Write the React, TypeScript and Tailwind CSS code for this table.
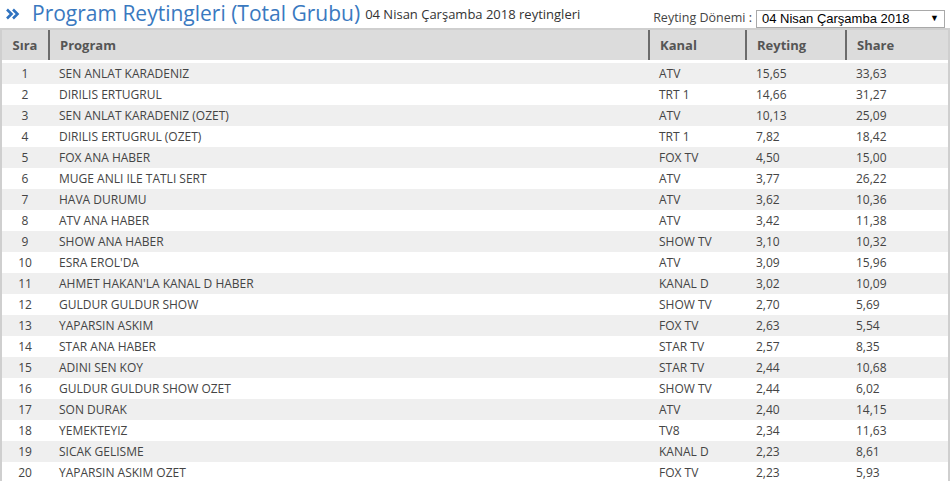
const rows: [string, string, string, string][] = [
  ['SEN ANLAT KARADENIZ', 'ATV', '15,65', '33,63'],
  ['DIRILIS ERTUGRUL', 'TRT 1', '14,66', '31,27'],
  ['SEN ANLAT KARADENIZ (OZET)', 'ATV', '10,13', '25,09'],
  ['DIRILIS ERTUGRUL (OZET)', 'TRT 1', '7,82', '18,42'],
  ['FOX ANA HABER', 'FOX TV', '4,50', '15,00'],
  ['MUGE ANLI ILE TATLI SERT', 'ATV', '3,77', '26,22'],
  ['HAVA DURUMU', 'ATV', '3,62', '10,36'],
  ['ATV ANA HABER', 'ATV', '3,42', '11,38'],
  ['SHOW ANA HABER', 'SHOW TV', '3,10', '10,32'],
  ["ESRA EROL'DA", 'ATV', '3,09', '15,96'],
  ["AHMET HAKAN'LA KANAL D HABER", 'KANAL D', '3,02', '10,09'],
  ['GULDUR GULDUR SHOW', 'SHOW TV', '2,70', '5,69'],
  ['YAPARSIN ASKIM', 'FOX TV', '2,63', '5,54'],
  ['STAR ANA HABER', 'STAR TV', '2,57', '8,35'],
  ['ADINI SEN KOY', 'STAR TV', '2,44', '10,68'],
  ['GULDUR GULDUR SHOW OZET', 'SHOW TV', '2,44', '6,02'],
  ['SON DURAK', 'ATV', '2,40', '14,15'],
  ['YEMEKTEYIZ', 'TV8', '2,34', '11,63'],
  ['SICAK GELISME', 'KANAL D', '2,23', '8,61'],
  ['YAPARSIN ASKIM OZET', 'FOX TV', '2,23', '5,93'],
];

function DoubleChevron() {
  return (
    <svg width="14" height="12" viewBox="0 0 14 12" className="shrink-0">
      <path d="M1 1.5 L5.5 6 L1 10.5" fill="none" stroke="#2f72c0" strokeWidth="2.6" />
      <path d="M7 1.5 L11.5 6 L7 10.5" fill="none" stroke="#2f72c0" strokeWidth="2.6" />
    </svg>
  );
}

export default function App() {
  return (
    <div
      className="w-[951px] h-[481px] overflow-hidden bg-white text-[#444]"
      style={{ fontFamily: '"Open Sans", "Noto Sans", sans-serif' }}
    >
      {/* Başlık */}
      <div className="h-[28px] flex items-end justify-between pr-[6px]">
        <div className="flex items-center pl-[6px] pb-[1px]">
          <DoubleChevron />
          <span className="ml-[12px] text-[21px] leading-[27px] text-[#3a79bf]">
            Program Reytingleri (Total Grubu)
          </span>
          <span className="ml-[5px] text-[13px] text-[#333] mt-[3px]">
            04 Nisan Çarşamba 2018 reytingleri
          </span>
        </div>
        <div className="flex items-center">
          <span className="text-[12.5px] text-[#444] mr-[4px]">Reyting Dönemi :</span>
          <div
            className="w-[189px] h-[18px] border border-[#a9a9a9] flex items-center justify-between px-[5px] text-[13px] text-black"
            style={{ fontFamily: '"Liberation Sans", Arial, sans-serif' }}
          >
            <span>04 Nisan Çarşamba 2018</span>
            <span className="text-[9px]">▼</span>
          </div>
        </div>
      </div>

      {/* Tablo */}
      <div className="border-t-2 border-l-2 border-r-2 border-[#cfcfcf] w-[950px]">
        <div className="grid grid-cols-[46px_600px_97px_100px_1fr] h-[33px] bg-[#dcdcdc] text-[13px] font-bold text-[#555] border-b-[3px] border-white">
          <div className="flex items-center justify-center pt-[1px]">Sıra</div>
          <div className="flex items-center pl-[10px] pt-[1px] border-l-2 border-[#6b6b6b]">Program</div>
          <div className="flex items-center pl-[10px] pt-[1px] border-l-2 border-[#6b6b6b]">Kanal</div>
          <div className="flex items-center pl-[10px] pt-[1px] border-l-2 border-[#6b6b6b]">Reyting</div>
          <div className="flex items-center pl-[10px] pt-[1px] border-l-2 border-[#6b6b6b]">Share</div>
        </div>
        {rows.map((r, i) => (
          <div
            key={i}
            className={
              'grid grid-cols-[46px_600px_97px_100px_1fr] h-[21px] items-center text-[12px] ' +
              (i % 2 === 0 ? 'bg-[#efefef]' : 'bg-white')
            }
          >
            <div className="text-center">{i + 1}</div>
            <div className="pl-[11px]">{r[0]}</div>
            <div className="pl-[11px]">{r[1]}</div>
            <div className="pl-[11px]">{r[2]}</div>
            <div className="pl-[11px]">{r[3]}</div>
          </div>
        ))}
      </div>
    </div>
  );
}
